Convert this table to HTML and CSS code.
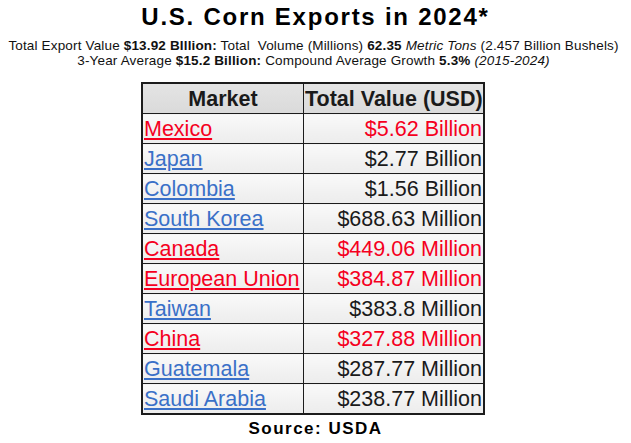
FILE: index.html
```html
<!DOCTYPE html>
<html>
<head>
<meta charset="utf-8">
<link rel="stylesheet" href="styles.css">
</head>
<body>
<div class="page">
  <h1 class="title">U.S. Corn Exports in 2024*</h1>
  <div class="sub">
    <div>Total Export Value <b>$13.92 BIllion:</b> Total&nbsp; Volume (Millions) <b>62.35</b> <i>Metric Tons</i> (2.457 Billion Bushels)</div>
    <div>3-Year Average <b>$15.2 Billion:</b> Compound Average Growth <b>5.3%</b> <i>(2015-2024)</i></div>
  </div>
  <table class="tbl">
    <thead>
      <tr><th class="c1">Market</th><th class="c2">Total Value (USD)</th></tr>
    </thead>
    <tbody>
      <tr class="red"><td class="c1"><a>Mexico</a></td><td class="c2">$5.62 Billion</td></tr>
      <tr class="blue"><td class="c1"><a>Japan</a></td><td class="c2">$2.77 Billion</td></tr>
      <tr class="blue"><td class="c1"><a>Colombia</a></td><td class="c2">$1.56 Billion</td></tr>
      <tr class="blue"><td class="c1"><a>South Korea</a></td><td class="c2">$688.63 Million</td></tr>
      <tr class="red"><td class="c1"><a>Canada</a></td><td class="c2">$449.06 Million</td></tr>
      <tr class="red"><td class="c1"><a>European Union</a></td><td class="c2">$384.87 Million</td></tr>
      <tr class="blue"><td class="c1"><a>Taiwan</a></td><td class="c2">$383.8 Million</td></tr>
      <tr class="red"><td class="c1"><a>China</a></td><td class="c2">$327.88 Million</td></tr>
      <tr class="blue"><td class="c1"><a>Guatemala</a></td><td class="c2">$287.77 Million</td></tr>
      <tr class="blue"><td class="c1"><a>Saudi Arabia</a></td><td class="c2">$238.77 Million</td></tr>
    </tbody>
  </table>
  <div class="source">Source: USDA</div>
</div>
</body>
</html>
```
FILE: styles.css
```css
html, body {
  margin: 0;
  padding: 0;
  background: #ffffff;
}
body {
  font-family: "Liberation Sans", Arial, sans-serif;
  color: #000;
  width: 631px;
  height: 443px;
  overflow: hidden;
}
.page {
  display: flex;
  flex-direction: column;
  align-items: center;
}
.title {
  margin: 0;
  padding-top: 2px;
  font-size: 24px;
  line-height: 30px;
  font-weight: bold;
  letter-spacing: 1.75px;
  color: #000;
}
.sub {
  margin-top: 7px;
  margin-right: 4px;
  font-size: 13.5px;
  line-height: 14.5px;
  letter-spacing: 0.16px;
  text-align: center;
  color: #111;
}
.tbl {
  margin-top: 14px;
  margin-right: 5px;
  border-collapse: collapse;
  border: 2px solid #1c1c1c;
  font-size: 21.5px;
  table-layout: fixed;
  width: 344px;
}
.tbl th, .tbl td {
  border: 1.5px solid #1c1c1c;
  height: 29px;
  padding: 0 1px 0 1px;
  white-space: nowrap;
  overflow: hidden;
  line-height: 28px;
}
.tbl th {
  background: linear-gradient(#e4e4e4, #dadada);
  font-weight: bold;
  color: #1a1a1a;
  text-align: center;
}
.tbl th.c2 {
  text-align: right;
}
.tbl td {
  background: linear-gradient(#f9f9f9, #ececec);
}
.c1 {
  width: 158px;
  text-align: left;
}
.c2 {
  text-align: right;
}
.tbl td a {
  text-decoration: underline;
  text-underline-offset: 2px;
}
.red td, .red a {
  color: #f5001e;
}
.blue a {
  color: #3a70c8;
}
.blue td.c2 {
  color: #1a1a1a;
}
.source {
  margin-top: 4px;
  font-size: 17px;
  line-height: 20px;
  font-weight: bold;
  letter-spacing: 1.5px;
}
```
